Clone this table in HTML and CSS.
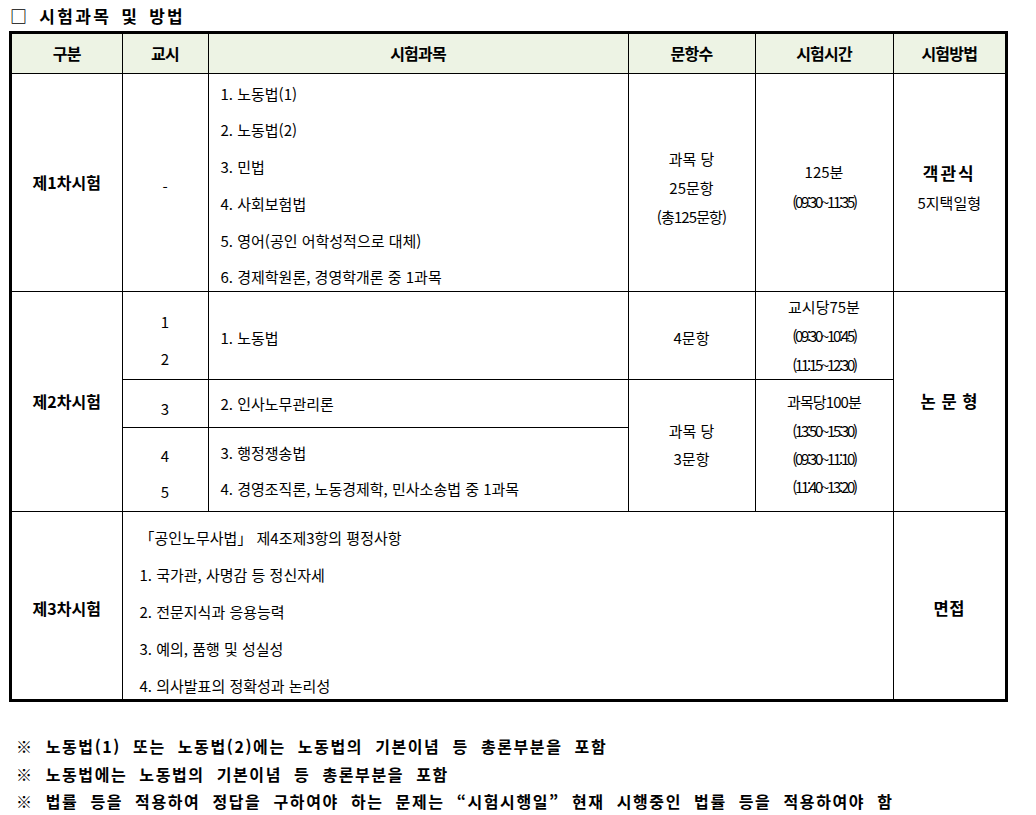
FILE: index.html
```html
<!DOCTYPE html>
<html lang="ko">
<head>
<meta charset="utf-8">
<title>시험과목 및 방법</title>
<link rel="stylesheet" href="styles.css">
</head>
<body>
<div class="page">
  <h2 class="title">□ 시험과목 및 방법</h2>
  <div class="frame">
    <table class="exam">
      <colgroup>
        <col class="c1"><col class="c2"><col class="c3"><col class="c4"><col class="c5"><col class="c6">
      </colgroup>
      <thead>
        <tr class="r-head">
          <th>구분</th><th>교시</th><th>시험과목</th><th>문항수</th><th>시험시간</th><th>시험방법</th>
        </tr>
      </thead>
      <tbody>
        <tr class="r1">
          <td class="stage">제1차시험</td>
          <td class="center dash">-</td>
          <td class="list list-r1">
            <div>1. 노동법(1)</div>
            <div>2. 노동법(2)</div>
            <div>3. 민법</div>
            <div>4. 사회보험법</div>
            <div>5. 영어(공인 어학성적으로 대체)</div>
            <div>6. 경제학원론, 경영학개론 중 1과목</div>
          </td>
          <td class="center lh29 shift">과목 당<br>25문항<br><span class="tight">(총125문항)</span></td>
          <td class="center lh30 shift">125분<br><span class="time">(09:30~11:35)</span></td>
          <td class="center lh29 shift"><strong class="spaced">객관식</strong><br>5지택일형</td>
        </tr>
        <tr class="r2a">
          <td class="stage" rowspan="3">제2차시험</td>
          <td class="center lh37 shift">1<br>2</td>
          <td class="subject nudge">1. 노동법</td>
          <td class="center nudge">4문항</td>
          <td class="center lh29 top-pad">교시당75분<br><span class="time">(09:30~10:45)</span><br><span class="time">(11:15~12:30)</span></td>
          <td class="center method" rowspan="3"><strong>논 문 형</strong></td>
        </tr>
        <tr class="r2b">
          <td class="center shift">3</td>
          <td class="subject">2. 인사노무관리론</td>
          <td class="center lh28" rowspan="2">과목 당<br>3문항</td>
          <td class="center lh28" rowspan="2"><span class="tight">과목당100분</span><br><span class="time">(13:50~15:30)</span><br><span class="time">(09:30~11:10)</span><br><span class="time">(11:40~13:20)</span></td>
        </tr>
        <tr class="r2c">
          <td class="center lh36 shift">4<br>5</td>
          <td class="subject lh36 nudge">3. 행정쟁송법<br>4. 경영조직론, 노동경제학, 민사소송법 중 1과목</td>
        </tr>
        <tr class="r3">
          <td class="stage stage-r3">제3차시험</td>
          <td class="list list-r3" colspan="4">
            <div>「공인노무사법」 제4조제3항의 평정사항</div>
            <div>1. 국가관, 사명감 등 정신자세</div>
            <div>2. 전문지식과 응용능력</div>
            <div>3. 예의, 품행 및 성실성</div>
            <div>4. 의사발표의 정확성과 논리성</div>
          </td>
          <td class="center stage-r3 method"><strong>면접</strong></td>
        </tr>
      </tbody>
    </table>
  </div>
  <ul class="notes">
    <li>※ 노동법(1) 또는 노동법(2)에는 노동법의 기본이념 등 총론부분을 포함</li>
    <li>※ 노동법에는 노동법의 기본이념 등 총론부분을 포함</li>
    <li>※ 법률 등을 적용하여 정답을 구하여야 하는 문제는 “시험시행일” 현재 시행중인 법률 등을 적용하여야 함</li>
  </ul>
</div>
</body>
</html>
```

FILE: styles.css
```css
html, body {
  margin: 0;
  padding: 0;
  background: #ffffff;
}

body {
  font-family: "Noto Sans CJK KR", "Noto Sans", sans-serif;
  color: #000;
  font-size: 15px;
}

.page {
  padding-left: 9px;
}

.title {
  margin: 0;
  padding: 6px 0 0 1px;
  height: 25px;
  font-size: 17px;
  line-height: 20px;
  font-weight: 700;
  letter-spacing: 2.3px;
  word-spacing: 3px;
}

.frame {
  width: 993px;
  border: 3px solid #000;
}

.exam {
  width: 993px;
  table-layout: fixed;
  border-collapse: collapse;
  border-style: hidden;
}

.c1 { width: 110px; }
.c2 { width: 86px; }
.c3 { width: 420px; }
.c4 { width: 127px; }
.c5 { width: 138px; }
.c6 { width: 112px; }

.exam th,
.exam td {
  border: 1px solid #000;
  padding: 0;
  vertical-align: middle;
}

.exam th {
  background: #edf3e4;
  font-weight: 700;
  font-size: 16px;
  line-height: 20px;
  text-align: center;
  letter-spacing: -0.8px;
}

.r-head { height: 39px; }
.r1 { height: 218px; }
.r2a { height: 88px; }
.r2b { height: 48px; }
.r2c { height: 84px; }
.r3 { height: 188px; }

.stage {
  text-align: center;
  font-weight: 700;
  font-size: 16px;
  letter-spacing: 0;
}

.stage-r3 { padding-top: 6px !important; }

.center { text-align: center; }

.dash { padding-top: 8px !important; }

.list {
  vertical-align: top !important;
}

.list div {
  line-height: 26px;
}

.list-r1 {
  padding: 7px 0 0 12px !important;
}

.list-r1 div + div { margin-top: 10.8px; }

.list-r3 {
  padding: 13px 0 0 17px !important;
}

.list-r3 div + div { margin-top: 11px; }

.subject {
  padding-left: 12px !important;
}

.lh28 { line-height: 28.3px; }
.lh29 { line-height: 29px; }
.lh30 { line-height: 30px; }
.lh36 { line-height: 36px; }
.lh37 { line-height: 37px; }

.shift { padding-top: 10px !important; }
.nudge { padding-top: 4px !important; }
.top-pad { padding-top: 0 !important; }

.time {
  letter-spacing: -2.3px;
}

.tight {
  letter-spacing: -0.9px;
}

.spaced {
  font-size: 17px;
  letter-spacing: 2px;
}

.method strong {
  font-size: 16.5px;
  letter-spacing: 0.5px;
}

.notes {
  list-style: none;
  margin: 0;
  padding: 31px 0 0 7px;
}

.notes li {
  font-size: 16px;
  font-weight: 700;
  line-height: 27.5px;
  letter-spacing: 1.6px;
  word-spacing: 6px;
}
```
